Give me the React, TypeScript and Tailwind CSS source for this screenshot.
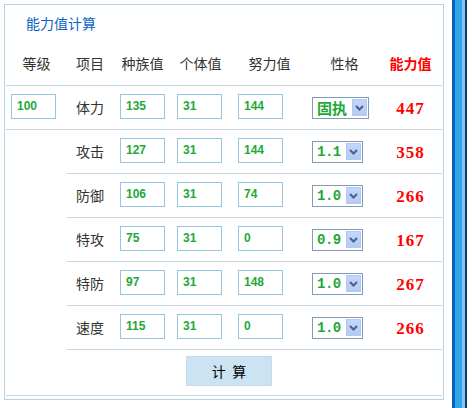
import React from "react";

type Row = { name: string; base: number; iv: number; ev: number; nature: string; val: number };

const rows: Row[] = [
  { name: "体力", base: 135, iv: 31, ev: 144, nature: "固执", val: 447 },
  { name: "攻击", base: 127, iv: 31, ev: 144, nature: "1.1", val: 358 },
  { name: "防御", base: 106, iv: 31, ev: 74, nature: "1.0", val: 266 },
  { name: "特攻", base: 75, iv: 31, ev: 0, nature: "0.9", val: 167 },
  { name: "特防", base: 97, iv: 31, ev: 148, nature: "1.0", val: 267 },
  { name: "速度", base: 115, iv: 31, ev: 0, nature: "1.0", val: 266 },
];

const cjk = "font-['Noto_Sans_CJK_SC',sans-serif]";

function Field({ value }: { value: number }) {
  return (
    <div className="w-[45px] h-[25px] border border-[#93c6e0] bg-white flex items-center pl-[5px] mb-[3px] font-['Liberation_Sans',sans-serif] font-bold text-[12px] text-[#1ea83a]">
      {value}
    </div>
  );
}

function Select({ value }: { value: string }) {
  const isCjk = !/^[0-9.]+$/.test(value);
  return (
    <div
      className={`h-[22px] border border-[#7f9db9] bg-white flex items-center justify-between pl-[4px] pr-px ${
        isCjk ? "w-[57px]" : "w-[51px]"
      }`}
    >
      <span
        className={
          isCjk
            ? `${cjk} font-bold text-[15px] leading-none text-[#1ea83a]`
            : "font-['Liberation_Mono',monospace] font-bold text-[14px] tracking-[-0.5px] leading-none text-[#1ea83a]"
        }
      >
        {value}
      </span>
      <span className="w-[15px] h-[17px] bg-gradient-to-b from-[#c2d6fb] to-[#b4cbf7] border border-[#b5c9f0] flex items-center justify-center">
        <svg width="9" height="6" viewBox="0 0 9 6">
          <path d="M1 1 L4.5 4.5 L8 1" stroke="#4d6185" strokeWidth="2" fill="none" />
        </svg>
      </span>
    </div>
  );
}

function RowCells({ r }: { r: Row }) {
  return (
    <>
      <div className={`w-[46px] flex items-center justify-center ${cjk} text-[14px] text-[#333]`}>{r.name}</div>
      <div className="w-[59px] flex items-center pl-[7px]">
        <Field value={r.base} />
      </div>
      <div className="w-[57px] flex items-center pl-[5px]">
        <Field value={r.iv} />
      </div>
      <div className="w-[81px] flex items-center pl-[9px]">
        <Field value={r.ev} />
      </div>
      <div className="w-[69px] flex items-center pl-[2px]">
        <Select value={r.nature} />
      </div>
      <div className="w-[63px] flex items-center justify-center pt-[3px] font-['Liberation_Serif',serif] font-bold text-[17px] tracking-[1px] text-[#ff0000]">
        {r.val}
      </div>
    </>
  );
}

export default function App() {
  const [first, ...rest] = rows;
  return (
    <div className="w-[473px] h-[408px] bg-white flex">
      <div className="pt-[4px] pl-[4px]">
        <div className="w-[440px] h-[396px] border border-[#b5d3e7] px-px flex flex-col">
          <div className={`h-[36px] flex items-center pl-[20px] ${cjk} text-[14px] text-[#0a64c8]`}>能力值计算</div>
          <div className={`h-[45px] flex border-b border-[#c5d5e2] ${cjk} text-[14px] text-[#333]`}>
            <div className="w-[61px] flex items-center justify-center">等级</div>
            <div className="w-[46px] flex items-center justify-center">项目</div>
            <div className="w-[59px] flex items-center justify-center">种族值</div>
            <div className="w-[57px] flex items-center justify-center">个体值</div>
            <div className="w-[81px] flex items-center justify-center">努力值</div>
            <div className="w-[69px] flex items-center justify-center">性格</div>
            <div className="w-[63px] flex items-center justify-center font-bold text-[#ff0000]">能力值</div>
          </div>
          <div className="h-[44px] flex border-b border-[#c5d5e2]">
            <div className="w-[61px] flex items-center pl-[5px]">
              <Field value={100} />
            </div>
            <RowCells r={first} />
          </div>
          <div className="flex">
            <div className="w-[61px]" />
            <div className="flex flex-col">
              {rest.map((r) => (
                <div key={r.name} className="h-[44px] flex border-b border-[#c5d5e2]">
                  <RowCells r={r} />
                </div>
              ))}
            </div>
          </div>
          <div className="h-[46px] border-b border-[#c5d5e2] pt-[6px] pl-[180px]">
            <div className={`w-[86px] h-[30px] bg-[#cbe3f2] border border-[#c3dced] flex items-center justify-center ${cjk} text-[14px] text-black`}>
              计&nbsp;&nbsp;算
            </div>
          </div>
        </div>
      </div>
      <div className="ml-[8px] flex h-[408px]">
        <div className="w-[3px] bg-[#0b5fb5]" />
        <div className="w-[7px] bg-[#2ea6ec]" />
        <div className="w-[3px] bg-[#86c6ee]" />
        <div className="w-[2px] bg-[#0a3a6e]" />
      </div>
    </div>
  );
}
